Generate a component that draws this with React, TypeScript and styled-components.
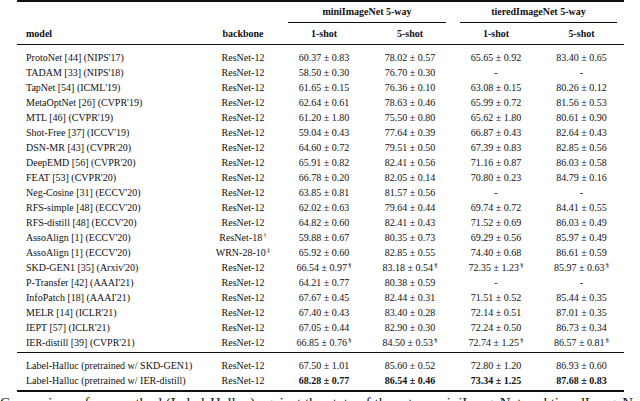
import React from "react";
import styled, { createGlobalStyle } from "styled-components";

const GlobalStyle = createGlobalStyle`
  html, body {
    margin: 0;
    padding: 0;
    background: #fff;
  }
  body {
    font-family: "Liberation Serif", "Times New Roman", serif;
    color: #111;
    overflow: hidden;
  }
`;

const COLS = "188px 76px 86px 86px 86px 85px";

const Page = styled.div`
  width: 640px;
  height: 401px;
  overflow: hidden;
`;

const Table = styled.div`
  margin-left: 17px;
  width: 607px;
  border-top: 2px solid #111;
  border-bottom: 2px solid #111;
  font-size: 10px;
`;

const Row = styled.div<{ $h?: number }>`
  display: grid;
  grid-template-columns: ${COLS};
  height: ${(p) => p.$h ?? 15}px;
  line-height: ${(p) => p.$h ?? 15}px;
  white-space: nowrap;
`;

const Cell = styled.div<{ $left?: boolean; $bold?: boolean; $span?: number }>`
  text-align: ${(p) => (p.$left ? "left" : "center")};
  padding-left: ${(p) => (p.$left ? "9px" : "0")};
  font-weight: ${(p) => (p.$bold ? 700 : 400)};
  grid-column: ${(p) => (p.$span ? `span ${p.$span}` : "auto")};
`;

const RuleRow = styled.div`
  display: grid;
  grid-template-columns: ${COLS};
  height: 1px;
`;

const CmidRule = styled.div`
  grid-column: span 2;
  margin: 0 7px;
  background: #111;
`;

const MidRule = styled.div`
  height: 1px;
  background: #111;
`;

const Body = styled.div`
  padding: 5px 0 2px;
`;

const Sup = styled.sup`
  font-size: 7px;
  line-height: 0;
  vertical-align: 4px;
  margin-left: 1px;
`;

const Caption = styled.div`
  margin-top: 2px;
  font-size: 15px;
  line-height: 18px;
  white-space: nowrap;
  overflow: hidden;
`;

type Data = [string, string, string, string, string, string];

const main: Data[] = [
  ["ProtoNet [44] (NIPS'17)", "ResNet-12", "60.37 ± 0.83", "78.02 ± 0.57", "65.65 ± 0.92", "83.40 ± 0.65"],
  ["TADAM [33] (NIPS'18)", "ResNet-12", "58.50 ± 0.30", "76.70 ± 0.30", "-", "-"],
  ["TapNet [54] (ICML'19)", "ResNet-12", "61.65 ± 0.15", "76.36 ± 0.10", "63.08 ± 0.15", "80.26 ± 0.12"],
  ["MetaOptNet [26] (CVPR'19)", "ResNet-12", "62.64 ± 0.61", "78.63 ± 0.46", "65.99 ± 0.72", "81.56 ± 0.53"],
  ["MTL [46] (CVPR'19)", "ResNet-12", "61.20 ± 1.80", "75.50 ± 0.80", "65.62 ± 1.80", "80.61 ± 0.90"],
  ["Shot-Free [37] (ICCV'19)", "ResNet-12", "59.04 ± 0.43", "77.64 ± 0.39", "66.87 ± 0.43", "82.64 ± 0.43"],
  ["DSN-MR [43] (CVPR'20)", "ResNet-12", "64.60 ± 0.72", "79.51 ± 0.50", "67.39 ± 0.83", "82.85 ± 0.56"],
  ["DeepEMD [56] (CVPR'20)", "ResNet-12", "65.91 ± 0.82", "82.41 ± 0.56", "71.16 ± 0.87", "86.03 ± 0.58"],
  ["FEAT [53] (CVPR'20)", "ResNet-12", "66.78 ± 0.20", "82.05 ± 0.14", "70.80 ± 0.23", "84.79 ± 0.16"],
  ["Neg-Cosine [31] (ECCV'20)", "ResNet-12", "63.85 ± 0.81", "81.57 ± 0.56", "-", "-"],
  ["RFS-simple [48] (ECCV'20)", "ResNet-12", "62.02 ± 0.63", "79.64 ± 0.44", "69.74 ± 0.72", "84.41 ± 0.55"],
  ["RFS-distill [48] (ECCV'20)", "ResNet-12", "64.82 ± 0.60", "82.41 ± 0.43", "71.52 ± 0.69", "86.03 ± 0.49"],
  ["AssoAlign [1] (ECCV'20)", "ResNet-18†", "59.88 ± 0.67", "80.35 ± 0.73", "69.29 ± 0.56", "85.97 ± 0.49"],
  ["AssoAlign [1] (ECCV'20)", "WRN-28-10‡", "65.92 ± 0.60", "82.85 ± 0.55", "74.40 ± 0.68", "86.61 ± 0.59"],
  ["SKD-GEN1 [35] (Arxiv'20)", "ResNet-12", "66.54 ± 0.97§", "83.18 ± 0.54§", "72.35 ± 1.23§", "85.97 ± 0.63§"],
  ["P-Transfer [42] (AAAI'21)", "ResNet-12", "64.21 ± 0.77", "80.38 ± 0.59", "-", "-"],
  ["InfoPatch [18] (AAAI'21)", "ResNet-12", "67.67 ± 0.45", "82.44 ± 0.31", "71.51 ± 0.52", "85.44 ± 0.35"],
  ["MELR [14] (ICLR'21)", "ResNet-12", "67.40 ± 0.43", "83.40 ± 0.28", "72.14 ± 0.51", "87.01 ± 0.35"],
  ["IEPT [57] (ICLR'21)", "ResNet-12", "67.05 ± 0.44", "82.90 ± 0.30", "72.24 ± 0.50", "86.73 ± 0.34"],
  ["IER-distill [39] (CVPR'21)", "ResNet-12", "66.85 ± 0.76§", "84.50 ± 0.53§", "72.74 ± 1.25§", "86.57 ± 0.81§"],
];

const ours: Data[] = [
  ["Label-Halluc (pretrained w/ SKD-GEN1)", "ResNet-12", "67.50 ± 1.01", "85.60 ± 0.52", "72.80 ± 1.20", "86.93 ± 0.60"],
  ["Label-Halluc (pretrained w/ IER-distill)", "ResNet-12", "68.28 ± 0.77", "86.54 ± 0.46", "73.34 ± 1.25", "87.68 ± 0.83"],
];

// split a trailing dagger / section mark into a superscript
const withSup = (s: string) => {
  const last = s.slice(-1);
  if (last === "†" || last === "‡" || last === "§") {
    return (
      <>
        {s.slice(0, -1)}
        <Sup>{last}</Sup>
      </>
    );
  }
  return s;
};

const DataRow: React.FC<{ d: Data; bold?: boolean }> = ({ d, bold }) => (
  <Row>
    <Cell $left>{d[0]}</Cell>
    <Cell>{withSup(d[1])}</Cell>
    {d.slice(2).map((v, i) => (
      <Cell key={i} $bold={bold}>
        {withSup(v)}
      </Cell>
    ))}
  </Row>
);

export default function App() {
  return (
    <Page>
      <GlobalStyle />
      <Table>
        <Row $h={20}>
          <Cell />
          <Cell />
          <Cell $bold $span={2}>miniImageNet 5-way</Cell>
          <Cell $bold $span={2}>tieredImageNet 5-way</Cell>
        </Row>
        <RuleRow>
          <div />
          <div />
          <CmidRule />
          <CmidRule />
        </RuleRow>
        <Row $h={21}>
          <Cell $left $bold>model</Cell>
          <Cell $bold>backbone</Cell>
          <Cell $bold>1-shot</Cell>
          <Cell $bold>5-shot</Cell>
          <Cell $bold>1-shot</Cell>
          <Cell $bold>5-shot</Cell>
        </Row>
        <MidRule />
        <Body>
          {main.map((d, i) => (
            <DataRow key={i} d={d} />
          ))}
        </Body>
        <MidRule />
        <Body>
          {ours.map((d, i) => (
            <DataRow key={i} d={d} bold={i === 1} />
          ))}
        </Body>
      </Table>
      <Caption>
        Comparison of our method (Label-Halluc) against the state of the art on miniImageNet and tieredImageNet.
      </Caption>
    </Page>
  );
}
